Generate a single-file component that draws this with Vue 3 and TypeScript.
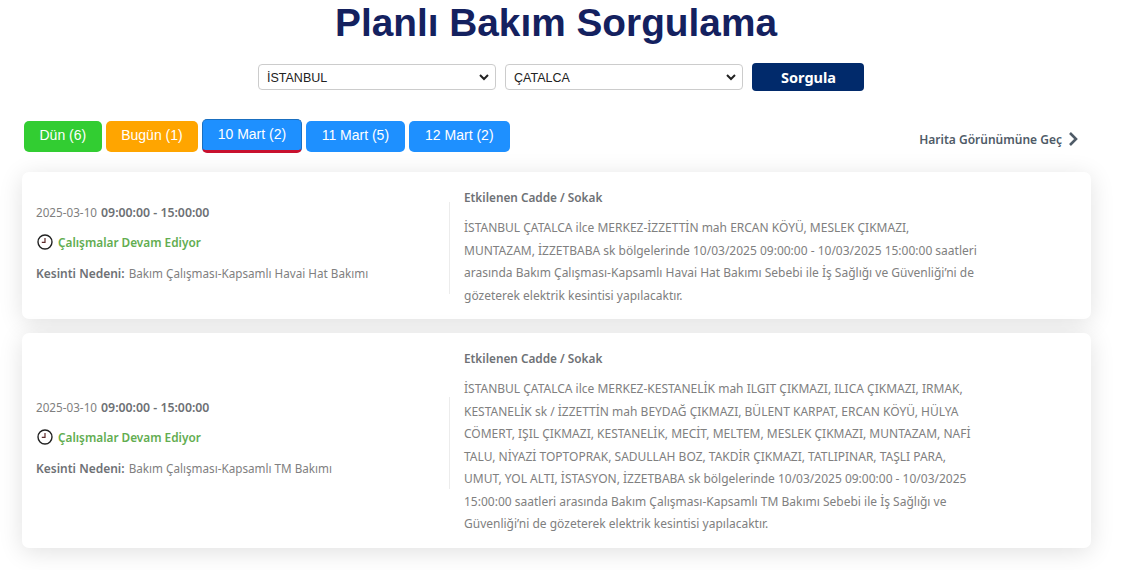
<script setup lang="ts">
interface Outage {
  date: string;
  time: string;
  reason: string;
  text: string[];
}

const tabs = [
  { label: 'Dün (6)', kind: 'green' },
  { label: 'Bugün (1)', kind: 'orange' },
  { label: '10 Mart (2)', kind: 'active' },
  { label: '11 Mart (5)', kind: 'blue' },
  { label: '12 Mart (2)', kind: 'blue' },
];

const pickers = ['İSTANBUL', 'ÇATALCA'];

const outages: Outage[] = [
  {
    date: '2025-03-10',
    time: '09:00:00 - 15:00:00',
    reason: 'Bakım Çalışması-Kapsamlı Havai Hat Bakımı',
    text: [
      'İSTANBUL ÇATALCA ilce MERKEZ-İZZETTİN mah ERCAN KÖYÜ, MESLEK ÇIKMAZI,',
      'MUNTAZAM, İZZETBABA sk bölgelerinde 10/03/2025 09:00:00 - 10/03/2025 15:00:00 saatleri',
      'arasında Bakım Çalışması-Kapsamlı Havai Hat Bakımı Sebebi ile İş Sağlığı ve Güvenliği’ni de',
      'gözeterek elektrik kesintisi yapılacaktır.',
    ],
  },
  {
    date: '2025-03-10',
    time: '09:00:00 - 15:00:00',
    reason: 'Bakım Çalışması-Kapsamlı TM Bakımı',
    text: [
      'İSTANBUL ÇATALCA ilce MERKEZ-KESTANELİK mah ILGIT ÇIKMAZI, ILICA ÇIKMAZI, IRMAK,',
      'KESTANELİK sk / İZZETTİN mah BEYDAĞ ÇIKMAZI, BÜLENT KARPAT, ERCAN KÖYÜ, HÜLYA',
      'CÖMERT, IŞIL ÇIKMAZI, KESTANELİK, MECİT, MELTEM, MESLEK ÇIKMAZI, MUNTAZAM, NAFİ',
      'TALU, NİYAZİ TOPTOPRAK, SADULLAH BOZ, TAKDİR ÇIKMAZI, TATLIPINAR, TAŞLI PARA,',
      'UMUT, YOL ALTI, İSTASYON, İZZETBABA sk bölgelerinde 10/03/2025 09:00:00 - 10/03/2025',
      '15:00:00 saatleri arasında Bakım Çalışması-Kapsamlı TM Bakımı Sebebi ile İş Sağlığı ve',
      'Güvenliği’ni de gözeterek elektrik kesintisi yapılacaktır.',
    ],
  },
];
</script>

<template>
  <div class="page">
    <h1 class="title">Planlı Bakım Sorgulama</h1>

    <div class="query">
      <div v-for="name in pickers" :key="name" class="picker-wrap">
        <select class="picker"><option>{{ name }}</option></select>
        <svg class="chevron" width="10" height="7" viewBox="0 0 10 7"><path d="M1 1l4 4 4-4" fill="none" stroke="#222" stroke-width="2" /></svg>
      </div>
      <button class="submit">Sorgula</button>
    </div>

    <div class="toolbar">
      <div class="tabs">
        <button v-for="tab in tabs" :key="tab.label" class="tab" :class="tab.kind">{{ tab.label }}</button>
      </div>
      <a class="map-link">
        Harita Görünümüne Geç
        <svg width="10" height="16" viewBox="0 0 10 16"><path d="M2 2l6 6-6 6" fill="none" stroke="#4f5b67" stroke-width="2.6" /></svg>
      </a>
    </div>

    <div class="list">
      <div v-for="(item, i) in outages" :key="i" class="card">
        <div class="info">
          <div class="when">{{ item.date }} <b>{{ item.time }}</b></div>
          <div class="status">
            <svg width="16" height="16" viewBox="0 0 16 16">
              <circle cx="8" cy="8" r="7" fill="none" stroke="#222" stroke-width="1.4" />
              <path d="M8 4V8.4H4.8" fill="none" stroke="#5e2a2a" stroke-width="1.2" />
            </svg>
            Çalışmalar Devam Ediyor
          </div>
          <div class="reason"><b>Kesinti Nedeni:</b> <span>{{ item.reason }}</span></div>
        </div>
        <div class="detail">
          <div class="detail-title">Etkilenen Cadde / Sokak</div>
          <p v-for="line in item.text" :key="line" class="line">{{ line }}</p>
        </div>
      </div>
    </div>
  </div>
</template>

<style>
html, body { background: #fff; overflow: hidden; }
</style>

<style scoped>
.page {
  width: 1132px;
  height: 570px;
  overflow: hidden;
  font-family: "Noto Sans", sans-serif;
}
.title {
  margin: 0;
  width: 1112px;
  height: 63px;
  line-height: 46px;
  text-align: center;
  font-family: "Liberation Sans", sans-serif;
  font-size: 38.8px;
  font-weight: 700;
  color: #14215f;
}
.query {
  display: flex;
  justify-content: center;
  align-items: center;
  gap: 9px;
  width: 1122px;
  height: 28px;
}
.picker-wrap {
  position: relative;
  display: flex;
}
.chevron {
  position: absolute;
  top: 10px;
  right: 7px;
}
.picker {
  appearance: none;
  width: 238px;
  height: 26px;
  padding: 1px 8px 0;
  background: #fff;
  border: 1px solid #ccc;
  border-radius: 4px;
  font-family: "Liberation Sans", sans-serif;
  font-size: 12.5px;
  color: #222;
}
.submit {
  width: 112px;
  height: 28px;
  padding: 0 0 0 1px;
  border: none;
  border-radius: 4px;
  background: #012a6b;
  color: #fff;
  font-family: "Noto Sans", sans-serif;
  font-size: 14.5px;
  font-weight: 700;
}
.toolbar {
  display: flex;
  justify-content: space-between;
  align-items: center;
  height: 34px;
  margin-top: 28px;
  padding: 0 54px 0 24px;
}
.tabs {
  display: flex;
  align-items: center;
  gap: 4px;
}
.tab {
  height: 31px;
  padding: 0 15.5px 2px;
  border: none;
  border-radius: 5px;
  color: #fff;
  font-family: "Liberation Sans", sans-serif;
  font-size: 14px;
}
.green { background: #32cd32; }
.orange { background: #ffa500; }
.blue { background: #1e90ff; padding: 0 16px 2px; }
.active {
  height: 34px;
  padding: 0 14.5px 3px;
  background: #1e90ff;
  border: 1px solid #1a6fc0;
  border-bottom: 3px solid #c8102e;
}
.map-link {
  display: flex;
  align-items: center;
  gap: 6px;
  padding-top: 6px;
  font-size: 12px;
  font-weight: 600;
  color: #4f5b67;
}
.list {
  display: flex;
  flex-direction: column;
  gap: 14px;
  width: 1069px;
  margin: 19px 0 0 22px;
}
.card {
  display: flex;
  align-items: center;
  padding: 17px 0 12px;
  background: #fff;
  border-radius: 7px;
  box-shadow: 0 4px 24px rgba(0, 0, 0, 0.12);
}
.info {
  width: 428px;
  flex: none;
  box-sizing: border-box;
  height: 92px;
  padding-left: 14px;
  border-right: 1px solid #ececec;
  color: #808080;
  font-size: 11.7px;
  line-height: 24px;
}
.when { margin: -2px 0 5px; }
.when b { color: #6e7175; font-weight: 600; font-size: 12.3px; margin-left: 1px; }
.status {
  display: flex;
  align-items: center;
  gap: 5px;
  margin-bottom: 7px;
  font-weight: 600;
  font-size: 11.8px;
  color: #62ad50;
}
.status svg { margin-left: 1px; }
.reason b { color: #6e7175; font-weight: 600; font-size: 12px; margin-right: 1px; }
.detail {
  padding-left: 14px;
  color: #808080;
  font-size: 12px;
}
.detail-title {
  height: 28px;
  font-size: 11.8px;
  font-weight: 600;
  color: #6e7175;
}
.line {
  margin: 0;
  line-height: 22.5px;
  white-space: nowrap;
}
</style>
